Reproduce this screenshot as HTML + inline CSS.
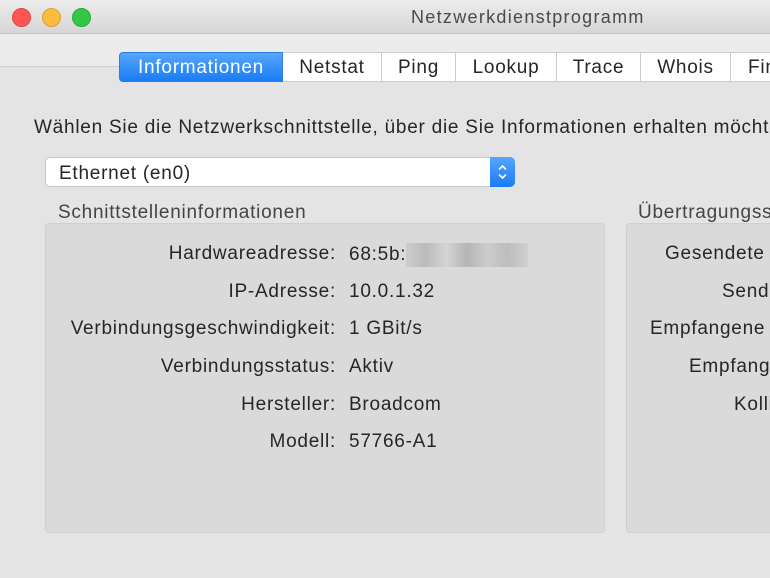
<!DOCTYPE html><html><head><style>
body{margin:0;width:770px;height:578px;overflow:hidden;background:#e4e4e4;font-family:"Liberation Sans",sans-serif;color:#262626;position:relative}
.tb{position:absolute;left:0;top:0;width:770px;height:33px;background:linear-gradient(#ececec,#d6d6d6);border-bottom:1px solid #c4c4c4}
.dot{position:absolute;top:8px;width:17px;height:17px;border-radius:50%}
.title{position:absolute;top:7px;left:411px;font-size:18px;letter-spacing:1.3px;color:#4a4a4a;white-space:nowrap}
.tool{position:absolute;top:34px;left:0;width:770px;height:32px;background:#ececec;border-bottom:1px solid #cfcfcf}
.tabs{position:absolute;top:52px;left:119px;height:30px;display:flex;font-size:19px;letter-spacing:0.75px;white-space:nowrap}
.tabs div{background:#fff;border:1px solid #cdcdcd;border-left:none;line-height:29px;text-align:center;overflow:hidden}
.tabs .a{background:linear-gradient(#56a6fb,#1a7cf5);color:#fff;border:1px solid #2a7fe6;border-radius:4px 0 0 4px}
.t{position:absolute;font-size:19px;letter-spacing:0.75px;white-space:nowrap}
.sel{position:absolute;left:45px;top:157px;width:470px;height:30px;background:#fff;border:1px solid #c6c6c6;border-radius:5px;box-sizing:border-box}
.arr{position:absolute;right:-1px;top:-1px;width:25px;height:30px;background:linear-gradient(#56a6fb,#1a7cf5);border-radius:0 5px 5px 0}
.box{position:absolute;background:#dadada;border:1px solid #cfcfcf;border-radius:4px}
.l{position:absolute;right:434px;font-size:19px;letter-spacing:0.75px;white-space:nowrap}
.v{position:absolute;left:349px;font-size:19px;letter-spacing:0.75px;white-space:nowrap}
</style></head><body>
<div class="tb"></div>
<div class="dot" style="left:12px;background:#fc5753;border:1px solid #df4744"></div>
<div class="dot" style="left:42px;background:#fdbc40;border:1px solid #de9f34"></div>
<div class="dot" style="left:72px;background:#33c748;border:1px solid #27aa35"></div>
<div class="title">Netzwerkdienstprogramm</div>
<div class="tool"></div>
<div class="tabs">
<div class="a" style="width:162px">Informationen</div>
<div style="width:98px">Netstat</div>
<div style="width:73px">Ping</div>
<div style="width:100px">Lookup</div>
<div style="width:83px">Trace</div>
<div style="width:89px">Whois</div>
<div style="width:60px;text-align:left;padding-left:17px">Finger</div>
</div>
<div class="t" style="left:34px;top:117px">Wählen Sie die Netzwerkschnittstelle, über die Sie Informationen erhalten möchten.</div>
<div class="sel"><div class="t" style="left:13px;top:5px">Ethernet (en0)</div><div class="arr"><svg width="25" height="30" viewBox="0 0 25 30"><path d="M9 12.5L12.5 9L16 12.5M9 17.5L12.5 21L16 17.5" fill="none" stroke="#fff" stroke-width="1.6"/></svg></div></div>
<div class="t" style="left:58px;top:202px;color:#444">Schnittstelleninformationen</div>
<div class="t" style="left:638px;top:202px;color:#444">Übertragungsstatistik</div>
<div class="box" style="left:45px;top:223px;width:558px;height:308px"></div>
<div class="box" style="left:626px;top:223px;width:200px;height:308px"></div>
<div class="l" style="top:243px">Hardwareadresse:</div><div class="v" style="top:243px">68:5b:<span style="display:inline-block;width:122px;height:24px;vertical-align:middle;background:linear-gradient(90deg,#ccc,#bbb,#d4d4d4,#b5b5b5,#ccc,#bdbdbd,#d0d0d0)"></span></div>
<div class="l" style="top:281px">IP-Adresse:</div><div class="v" style="top:281px">10.0.1.32</div>
<div class="l" style="top:318px">Verbindungsgeschwindigkeit:</div><div class="v" style="top:318px">1 GBit/s</div>
<div class="l" style="top:356px">Verbindungsstatus:</div><div class="v" style="top:356px">Aktiv</div>
<div class="l" style="top:394px">Hersteller:</div><div class="v" style="top:394px">Broadcom</div>
<div class="l" style="top:431px">Modell:</div><div class="v" style="top:431px">57766-A1</div>
<div class="t" style="left:665px;top:243px">Gesendete Pakete:</div>
<div class="t" style="left:722px;top:281px">Sendefehler:</div>
<div class="t" style="left:650px;top:318px">Empfangene Pakete:</div>
<div class="t" style="left:689px;top:356px">Empfangsfehler:</div>
<div class="t" style="left:734px;top:394px">Kollisionen:</div>
</body></html>
